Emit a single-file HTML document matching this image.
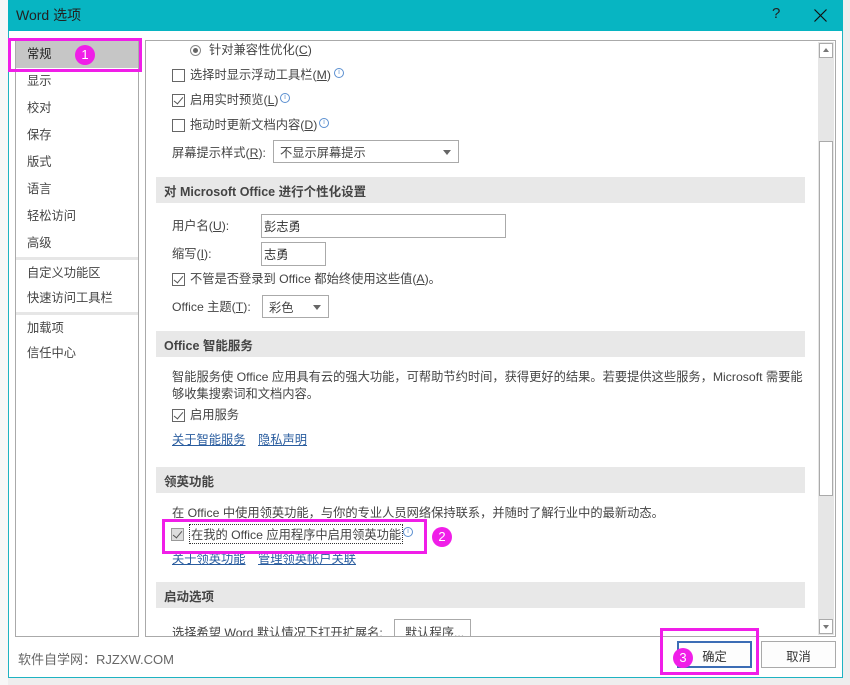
<!DOCTYPE html>
<html><head><meta charset="utf-8">
<style>
*{box-sizing:border-box;margin:0;padding:0}
body{width:850px;height:685px;background:#eeeeee;position:relative;overflow:hidden;font-family:"Liberation Sans","Noto Sans CJK SC",sans-serif;font-size:12.25px;color:#444}
.a{position:absolute;white-space:nowrap}
span.a{margin-top:-2px}
.win{position:absolute;left:8px;top:0;width:835px;height:678px;background:#fff;border:1px solid #1fb3c2}
.title{position:absolute;left:8px;top:0;width:835px;height:31px;background:#07b5c2;color:#222;font-size:14px}
.cb{position:absolute;width:13px;height:13px;border:1px solid #666;background:#fff}
.cb.c::after{content:"";position:absolute;left:3px;top:0px;width:4px;height:8px;border:solid #555;border-width:0 1.5px 1.5px 0;transform:rotate(40deg)}
.hdr{position:absolute;left:156px;width:649px;height:26px;background:#e8e8e8;font-weight:bold;color:#444;padding:4px 0 0 8px;font-size:12.5px}
.info{position:absolute;width:10px;height:10px;border:1px solid #5b8fd0;border-radius:50%;font-size:7px;color:#5b8fd0;text-align:center;line-height:8px}
.sel{position:absolute;border:1px solid #aaa;background:#fff;height:23px;padding:2px 6px}
.sel::after{content:"";position:absolute;right:7px;top:9px;border:4px solid transparent;border-top:5px solid #666}
.inp{position:absolute;border:1px solid #aaa;background:#fff;height:24px;padding:2px 2px;color:#333}
.lnk{color:#2a5d9f;text-decoration:underline}
.nav div{height:27px;padding:3px 0 0 11px;color:#444}
.badge{position:absolute;width:20px;height:20px;border-radius:50%;background:#f01ee8;color:#fff;text-align:center;font-size:13px;line-height:20px}
.mag{position:absolute;border:3px solid #f01ee8}
</style></head><body>
<div class="a" style="left:0;top:0;width:8px;height:685px;background:#f7f7f7"></div>
<div class="win"></div>
<div class="title"><span class="a" style="left:8px;top:7px">Word 选项</span><span class="a" style="left:764px;top:7px;font-size:15px">?</span>
<svg class="a" style="left:806px;top:9px" width="13" height="13"><path d="M0.5 0.5L12.5 12.5M12.5 0.5L0.5 12.5" stroke="#111" stroke-width="1.2"/></svg></div>

<!-- nav -->
<div class="a" style="left:15px;top:40px;width:124px;height:597px;border:1px solid #aaa;background:#fff"></div>
<div class="a nav" style="left:16px;top:41px;width:122px">
<div style="background:#c6c6c6;color:#222">常规</div>
<div>显示</div><div>校对</div><div>保存</div><div>版式</div><div>语言</div><div>轻松访问</div><div>高级</div>
<div style="border-top:3px solid #e6e6e6;height:28px">自定义功能区</div>
<div>快速访问工具栏</div>
<div style="border-top:3px solid #e6e6e6;height:28px">加载项</div>
<div>信任中心</div>
</div>
<div class="mag" style="left:8px;top:38px;width:134px;height:34px"></div>
<div class="badge" style="left:75px;top:45px">1</div>

<!-- content -->
<div class="a" style="left:145px;top:40px;width:691px;height:597px;border:1px solid #aaa;background:#fff;overflow:hidden"></div>
<div class="a" style="left:818px;top:42px;width:16px;height:593px;background:#e6e6e6"></div>
<div class="a" style="left:819px;top:43px;width:14px;height:15px;border:1px solid #aaa;background:#fff"><div class="a" style="left:3px;top:4px;border:3px solid transparent;border-bottom:4px solid #777;border-top:0"></div></div>
<div class="a" style="left:819px;top:141px;width:14px;height:355px;border:1px solid #aaa;background:#fff"></div>
<div class="a" style="left:819px;top:619px;width:14px;height:15px;border:1px solid #aaa;background:#fff"><div class="a" style="left:3px;top:5px;border:3px solid transparent;border-top:4px solid #777;border-bottom:0"></div></div>

<div class="a" style="left:190px;top:45px;width:11px;height:11px;border:1px solid #888;border-radius:50%"><div class="a" style="left:2px;top:2px;width:5px;height:5px;border-radius:50%;background:#666"></div></div>
<span class="a" style="left:209px;top:42px">针对兼容性优化(<u>C</u>)</span>
<div class="cb" style="left:172px;top:69px"></div><span class="a" style="left:190px;top:67px">选择时显示浮动工具栏(<u>M</u>)</span><div class="info" style="left:334px;top:68px">i</div>
<div class="cb c" style="left:172px;top:94px"></div><span class="a" style="left:190px;top:92px">启用实时预览(<u>L</u>)</span><div class="info" style="left:280px;top:93px">i</div>
<div class="cb" style="left:172px;top:119px"></div><span class="a" style="left:190px;top:117px">拖动时更新文档内容(<u>D</u>)</span><div class="info" style="left:319px;top:118px">i</div>
<span class="a" style="left:172px;top:145px">屏幕提示样式(<u>R</u>):</span>
<div class="sel" style="left:273px;top:140px;width:186px">不显示屏幕提示</div>

<div class="hdr" style="top:177px">对 Microsoft Office 进行个性化设置</div>
<span class="a" style="left:172px;top:218px">用户名(<u>U</u>):</span>
<div class="inp" style="left:261px;top:214px;width:245px">彭志勇</div>
<span class="a" style="left:172px;top:246px">缩写(<u>I</u>):</span>
<div class="inp" style="left:261px;top:242px;width:65px">志勇</div>
<div class="cb c" style="left:172px;top:273px"></div><span class="a" style="left:190px;top:271px">不管是否登录到 Office 都始终使用这些值(<u>A</u>)。</span>
<span class="a" style="left:172px;top:299px">Office 主题(<u>T</u>):</span>
<div class="sel" style="left:262px;top:295px;width:67px">彩色</div>

<div class="hdr" style="top:331px">Office 智能服务</div>
<span class="a" style="left:172px;top:369px">智能服务使 Office 应用具有云的强大功能，可帮助节约时间，获得更好的结果。若要提供这些服务，Microsoft 需要能</span>
<span class="a" style="left:172px;top:386px">够收集搜索词和文档内容。</span>
<div class="cb c" style="left:172px;top:409px"></div><span class="a" style="left:190px;top:407px">启用服务</span>
<span class="a lnk" style="left:172px;top:432px">关于智能服务</span><span class="a lnk" style="left:258px;top:432px">隐私声明</span>

<div class="hdr" style="top:467px">领英功能</div>
<span class="a" style="left:172px;top:505px">在 Office 中使用领英功能，与你的专业人员网络保持联系，并随时了解行业中的最新动态。</span>
<div class="cb c" style="left:171px;top:528px;background:#ddd;border-color:#999"></div>
<span class="a" style="left:189px;top:526px;border:1px dotted #333;padding:0 1px">在我的 Office 应用程序中启用领英功能</span><div class="info" style="left:403px;top:527px">i</div>
<span class="a lnk" style="left:172px;top:551px">关于领英功能</span><span class="a lnk" style="left:258px;top:551px">管理领英帐户关联</span>
<div class="mag" style="left:162px;top:519px;width:265px;height:35px"></div>
<div class="badge" style="left:432px;top:527px">2</div>

<div class="hdr" style="top:582px">启动选项</div>
<div class="a" style="left:146px;top:619px;width:672px;height:17px;overflow:hidden">
<span class="a" style="left:26px;top:6px">选择希望 Word 默认情况下打开扩展名:</span>
<div class="a" style="left:248px;top:0;width:77px;height:24px;border:1px solid #aaa;padding:3px 0 0 10px">默认程序...</div>
</div>

<span class="a" style="left:18px;top:651px;color:#666;font-size:13px">软件自学网：RJZXW.COM</span>
<div class="a" style="left:677px;top:641px;width:75px;height:27px;border:2px solid #3c6db5;background:#fdfdfd;text-align:center;padding-top:4px;color:#333">确定</div>
<div class="a" style="left:761px;top:641px;width:75px;height:27px;border:1px solid #aaa;background:#fdfdfd;text-align:center;padding-top:5px;color:#333">取消</div>
<div class="mag" style="left:660px;top:628px;width:99px;height:47px"></div>
<div class="badge" style="left:673px;top:648px">3</div>
</body></html>
